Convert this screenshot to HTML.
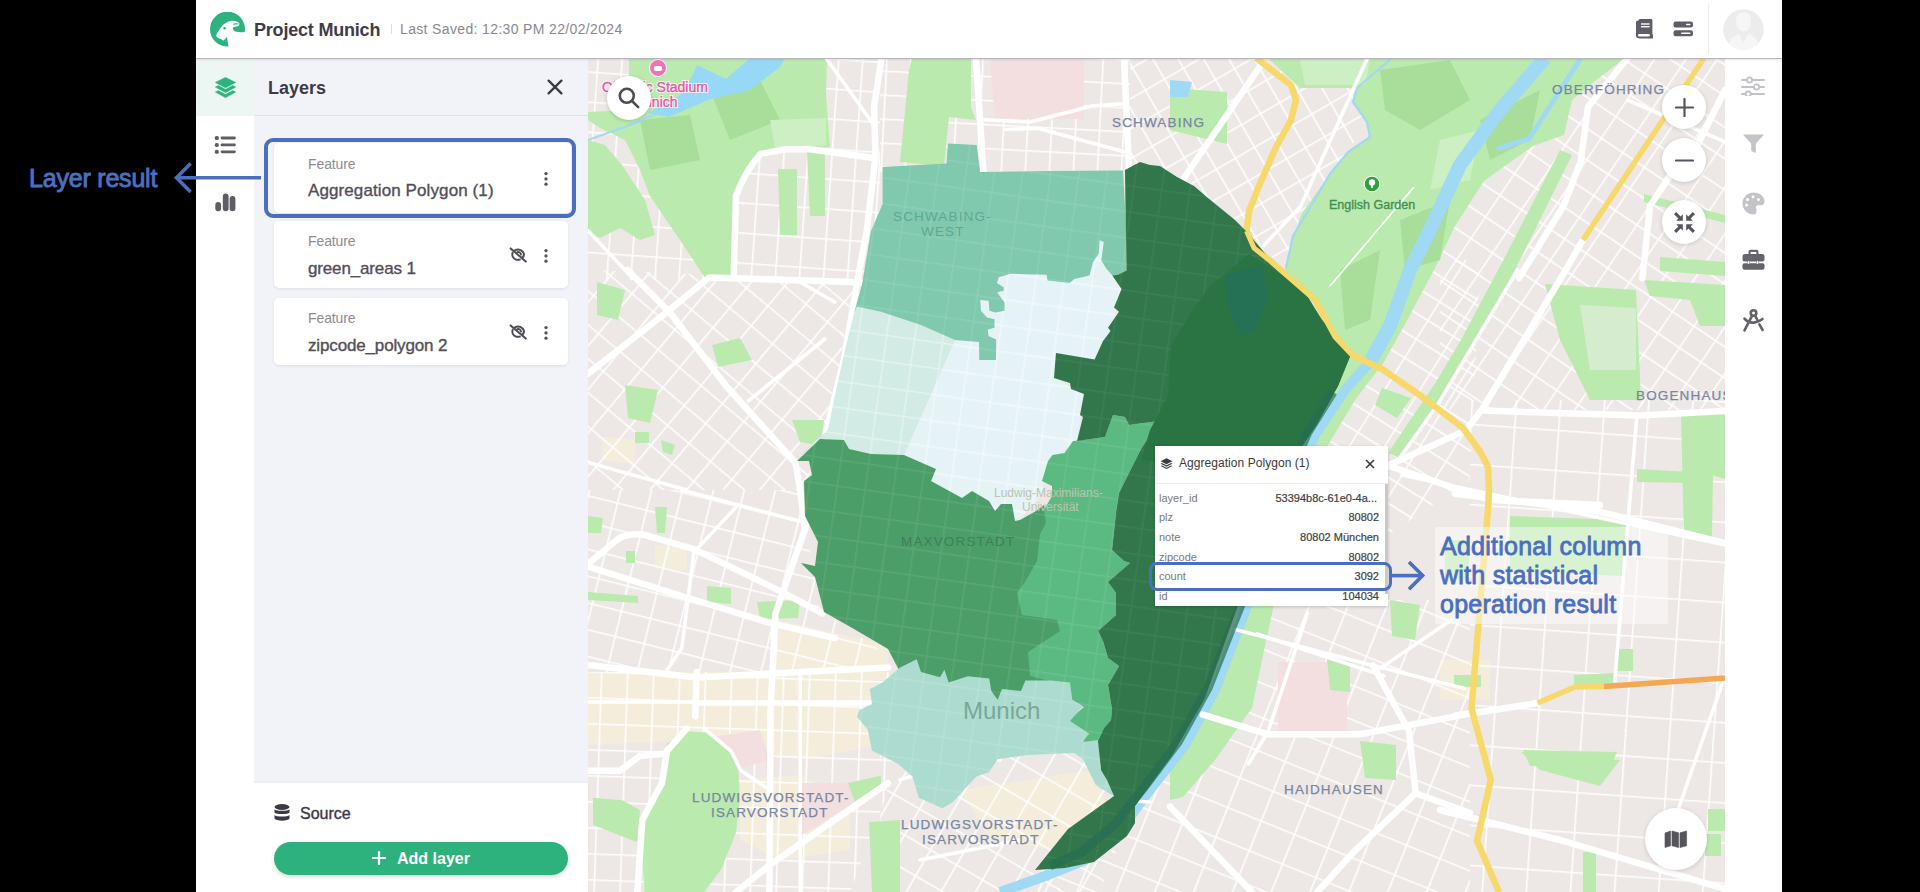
<!DOCTYPE html>
<html><head><meta charset="utf-8">
<style>
*{margin:0;padding:0;box-sizing:border-box}
html,body{width:1920px;height:892px;overflow:hidden;background:#000;font-family:"Liberation Sans",sans-serif}
.abs{position:absolute}
#app{position:absolute;left:196px;top:0;width:1586px;height:892px;background:#fff;overflow:hidden}
#header{position:absolute;left:0;top:0;width:1586px;height:59px;background:#fff;border-bottom:1px solid #b6b5bb;box-shadow:0 1px 2px rgba(0,0,0,0.10);z-index:5}
#iconcol{position:absolute;left:0;top:58px;width:58px;height:834px;background:#fff}
#panel{position:absolute;left:58px;top:58px;width:334px;height:834px;background:#f2f3f9}
#map{position:absolute;left:392px;top:58px;width:1137px;height:834px;background:#ede8e5;overflow:hidden}
#toolbar{position:absolute;left:1529px;top:58px;width:57px;height:834px;background:#fff}
.card{position:absolute;left:20px;width:294px;height:67px;background:#fff;border-radius:5px;box-shadow:0 1px 3px rgba(40,40,60,0.10)}
.card .lbl{position:absolute;left:34px;top:12px;font-size:14px;color:#8e8c92;letter-spacing:-0.1px}
.card .nm{position:absolute;left:34px;top:38px;font-size:17px;color:#524e5a;letter-spacing:-0.15px;-webkit-text-stroke:0.35px #524e5a}
.kebab{position:absolute;width:4px;height:16px}
.kebab i{position:absolute;left:0;width:3.5px;height:3.5px;border-radius:50%;background:#4b4855}
.ann{color:#4a70c0;font-family:"Liberation Sans",sans-serif}
</style></head>
<body>
<div id="app">
  <div id="header">
    <svg class="abs" style="left:14px;top:12px" width="35" height="35" viewBox="0 0 34 34">
      <path fill="#2eb27f" d="M18 33.6 A17 17 0 1 1 33.8 19.2 C32 20 30 19.8 27.5 19.4 C25 19.2 23 18.6 22.2 16.6 C22 15 23.2 14 25.5 14 C27.5 14 28.8 13 28.6 11 C27 9 24 8 21 8.6 C17 9.3 13 11.5 10.3 15.5 C8.5 18.2 6.6 20.8 6 22.6 C6.4 24.8 8 25.8 10.8 26.2 L13 28 L16.4 24.4 Z"/>
      <circle cx="14.2" cy="15.8" r="1.2" fill="#2eb27f"/>
      <path fill="#2eb27f" d="M22.5 11.5 C25 10.6 27.5 10.8 29 12 C27 11.8 25 12 22.5 12.5Z"/>
    </svg>
    <div class="abs" style="left:58px;top:20px;font-size:18px;font-weight:bold;color:#3f3c48;letter-spacing:-0.2px">Project Munich</div>
    <div class="abs" style="left:195px;top:24px;width:1px;height:10px;background:#dcdcdf"></div>
    <div class="abs" style="left:204px;top:21px;font-size:14px;color:#8b898f;letter-spacing:0.35px">Last Saved: 12:30 PM 22/02/2024</div>
    <div class="abs" style="left:1512px;top:4px;width:1px;height:50px;background:#ececee"></div>
    <svg class="abs" style="left:1439px;top:19px" width="20" height="20" viewBox="0 0 20 20">
      <path fill="#5f5e66" d="M3.5 1.5 Q3.5 0 5 0 L16 0 Q17.4 0 17.4 1.4 L17.4 14.5 L18 16.5 L18 19.5 L5 19.5 Q1 19.5 1 16.6 L1 3 Q1 1.5 3.5 1.5Z"/>
      <rect x="6" y="4.3" width="8.6" height="1.4" fill="#fff"/>
      <rect x="6" y="7" width="8.6" height="1.4" fill="#fff"/>
      <rect x="3" y="15" width="12" height="2.4" rx="1.2" fill="#fff"/>
    </svg>
    <svg class="abs" style="left:1477px;top:21px" width="20" height="16" viewBox="0 0 20 16">
      <rect x="0.5" y="0.5" width="19.5" height="6" rx="2.2" fill="#5f5e66"/>
      <rect x="0.5" y="9.3" width="19.5" height="6" rx="2.2" fill="#5f5e66"/>
      <rect x="13" y="2.8" width="4.5" height="1.5" rx="0.7" fill="#fff"/>
      <rect x="8" y="11.6" width="9.5" height="1.5" rx="0.7" fill="#fff"/>
    </svg>
    <svg class="abs" style="left:1527px;top:9px" width="41" height="41" viewBox="0 0 41 41">
      <circle cx="20.5" cy="20.5" r="20.3" fill="#ececec"/>
      <path fill="#f6f6f6" d="M13 12 C13 6 16 3.5 20.5 3.5 C25 3.5 28 6 28 12 C28 17 26 22 20.5 22.5 C15 22 13 17 13 12Z"/>
      <path fill="#f6f6f6" d="M6 34 C8 28 12 26.5 16 25 L20.5 34 L25 25 C29 26.5 33 28 35 34 C31 38.5 26 40.8 20.5 40.8 C15 40.8 10 38.5 6 34Z"/>
    </svg>
  </div>
  <div id="iconcol">
    <div class="abs" style="left:0;top:0;width:58px;height:58px;background:#ecf7f3"></div>
    <svg class="abs" style="left:19px;top:18.5px" width="21" height="21" viewBox="0 0 20 20">
      <path fill="#2eb27f" stroke="#2eb27f" stroke-width="0.6" stroke-linejoin="round" d="M10 0.4 L19.6 5.2 L10 10.2 L0.4 5.2Z"/>
      <path fill="#2eb27f" stroke="#2eb27f" stroke-width="0.6" stroke-linejoin="round" d="M0.4 9.6 L3.2 8.2 L10 11.8 L16.8 8.2 L19.6 9.6 L10 14.8Z"/>
      <path fill="#2eb27f" stroke="#2eb27f" stroke-width="0.6" stroke-linejoin="round" d="M0.4 14.4 L3.2 13 L10 16.6 L16.8 13 L19.6 14.4 L10 19.6Z"/>
    </svg>
    <svg class="abs" style="left:18px;top:77px" width="22" height="20" viewBox="0 0 22 20">
      <g fill="#5f5e66"><rect x="0.8" y="1" width="4" height="4" rx="1.6"/><rect x="0.8" y="7.9" width="4" height="4" rx="1.6"/><rect x="0.8" y="14.8" width="4" height="4" rx="1.6"/></g>
      <g stroke="#5f5e66" stroke-width="2.8" stroke-linecap="round"><path d="M8 3 H20.4"/><path d="M8 9.9 H20.4"/><path d="M8 16.8 H20.4"/></g>
    </svg>
    <svg class="abs" style="left:214px;top:192px;left:18px;top:134px" width="22" height="22" viewBox="0 0 22 22">
      <g stroke="#5f5e66" stroke-width="5.8" stroke-linecap="round"><path d="M4.2 12.9 V16.3"/><path d="M11.7 4.4 V16.3"/><path d="M18.5 6.9 V16.3"/></g>
    </svg>
  </div>
  <div id="panel">
    <div class="abs" style="left:0;top:57px;width:334px;height:1px;background:#e2e3e8"></div>
    <div class="abs" style="left:14px;top:20px;font-size:18px;font-weight:bold;color:#3d3a47">Layers</div>
    <svg class="abs" style="left:293px;top:21px" width="16" height="16" viewBox="0 0 16 16"><g stroke="#3d3a47" stroke-width="2.3" stroke-linecap="round"><path d="M1.6 1.6 L14.4 14.4"/><path d="M14.4 1.6 L1.6 14.4"/></g></svg>
    <div class="card" style="top:85px;width:297px;height:70px"><div class="lbl" style="top:13px">Feature</div><div class="nm" style="top:38px;letter-spacing:0.1px">Aggregation Polygon (1)</div><svg class="abs" style="left:269px;top:28px" width="6" height="16" viewBox="0 0 6 16"><g fill="#55525d"><circle cx="3" cy="2.6" r="1.65"/><circle cx="3" cy="7.9" r="1.65"/><circle cx="3" cy="13.2" r="1.65"/></g></svg></div>
    <div class="card" style="top:163px"><div class="lbl">Feature</div><div class="nm">green_areas 1</div><svg class="abs" style="left:235px;top:26px" width="18" height="16" viewBox="0 0 18 16"><g fill="none" stroke="#4f4c58" stroke-width="2" stroke-linecap="round"><path d="M5.5 3.6 C8.5 2 12 2.6 14 5 C15.5 7 15 9.2 13.2 10.8"/><path d="M3.6 5.8 C2.8 8.6 4 11.5 7 12.6 C8.4 13 9.5 12.9 10.8 12.6"/><path d="M8.3 5.2 C10 4.6 11.8 5.8 12 7.5"/><path d="M1.6 1.4 L16.8 14.6"/></g></svg><svg class="abs" style="left:269px;top:27px" width="6" height="16" viewBox="0 0 6 16"><g fill="#55525d"><circle cx="3" cy="2.6" r="1.65"/><circle cx="3" cy="7.9" r="1.65"/><circle cx="3" cy="13.2" r="1.65"/></g></svg></div>
    <div class="card" style="top:240px"><div class="lbl">Feature</div><div class="nm">zipcode_polygon 2</div><svg class="abs" style="left:235px;top:26px" width="18" height="16" viewBox="0 0 18 16"><g fill="none" stroke="#4f4c58" stroke-width="2" stroke-linecap="round"><path d="M5.5 3.6 C8.5 2 12 2.6 14 5 C15.5 7 15 9.2 13.2 10.8"/><path d="M3.6 5.8 C2.8 8.6 4 11.5 7 12.6 C8.4 13 9.5 12.9 10.8 12.6"/><path d="M8.3 5.2 C10 4.6 11.8 5.8 12 7.5"/><path d="M1.6 1.4 L16.8 14.6"/></g></svg><svg class="abs" style="left:269px;top:27px" width="6" height="16" viewBox="0 0 6 16"><g fill="#55525d"><circle cx="3" cy="2.6" r="1.65"/><circle cx="3" cy="7.9" r="1.65"/><circle cx="3" cy="13.2" r="1.65"/></g></svg></div>
    <div class="abs" style="left:0;top:725px;width:334px;height:109px;background:#fff;box-shadow:0 -1px 2px rgba(0,0,0,0.04)"></div>
    <svg class="abs" style="left:20px;top:746px" width="16" height="18" viewBox="0 0 16 18"><g fill="#3d3a47"><ellipse cx="8" cy="3" rx="7.5" ry="2.9"/><path d="M0.5 5.3 C2 7.3 14 7.3 15.5 5.3 L15.5 8.6 C14 10.6 2 10.6 0.5 8.6Z"/><path d="M0.5 11 C2 13 14 13 15.5 11 L15.5 14.6 C14 17.4 2 17.4 0.5 14.6Z"/></g></svg>
    <div class="abs" style="left:46px;top:747px;font-size:16px;color:#3d3a47;-webkit-text-stroke:0.4px #3d3a47">Source</div>
    <div class="abs" style="left:20px;top:784px;width:294px;height:33px;border-radius:17px;background:#2db27e;box-shadow:0 2px 4px rgba(0,0,0,0.15)"></div>
    <svg class="abs" style="left:118px;top:793px" width="14" height="14" viewBox="0 0 14 14"><g stroke="#fff" stroke-width="2.2" stroke-linecap="round"><path d="M7 1 V13"/><path d="M1 7 H13"/></g></svg>
    <div class="abs" style="left:143px;top:792px;font-size:16px;font-weight:bold;color:#fff">Add layer</div>
  </div>
  <div id="map">
<svg id="mapsvg" width="1137" height="834" viewBox="588 58 1137 834" style="position:absolute;left:0;top:0">
<defs>
<pattern id="p1" width="24" height="30" patternUnits="userSpaceOnUse" patternTransform="rotate(4)"><path d="M0 0.8 H24 M0.8 0 V30" stroke="#fff" stroke-width="1.6" fill="none"/></pattern>
<pattern id="p2" width="28" height="26" patternUnits="userSpaceOnUse" patternTransform="rotate(40)"><path d="M0 0.8 H28 M0.8 0 V26" stroke="#fff" stroke-width="1.6" fill="none"/></pattern>
<pattern id="p3" width="30" height="26" patternUnits="userSpaceOnUse" patternTransform="rotate(14)"><path d="M0 0.8 H30 M0.8 0 V26" stroke="#fff" stroke-width="1.6" fill="none"/></pattern>
<pattern id="p4" width="26" height="26" patternUnits="userSpaceOnUse" patternTransform="rotate(2)"><path d="M0 0.8 H26 M0.8 0 V26" stroke="#fff" stroke-width="1.6" fill="none"/></pattern>
<pattern id="p5" width="24" height="24" patternUnits="userSpaceOnUse" patternTransform="rotate(3)"><path d="M0 0.8 H24 M0.8 0 V24" stroke="#fff" stroke-width="1.6" fill="none"/></pattern>
<pattern id="p6" width="22" height="26" patternUnits="userSpaceOnUse" patternTransform="rotate(-30)"><path d="M0 0.8 H22 M0.8 0 V26" stroke="#fff" stroke-width="1.6" fill="none"/></pattern>
<pattern id="p7" width="22" height="30" patternUnits="userSpaceOnUse" patternTransform="rotate(-58)"><path d="M0 0.8 H22 M0.8 0 V30" stroke="#fff" stroke-width="1.6" fill="none"/></pattern>
<pattern id="p8" width="26" height="26" patternUnits="userSpaceOnUse" patternTransform="rotate(-56)"><path d="M0 0.8 H26 M0.8 0 V26" stroke="#fff" stroke-width="1.6" fill="none"/></pattern>
<pattern id="p9" width="36" height="32" patternUnits="userSpaceOnUse" patternTransform="rotate(22)"><path d="M0 0.8 H36 M0.8 0 V32" stroke="#fff" stroke-width="1.6" fill="none"/></pattern>
<pattern id="p10" width="44" height="40" patternUnits="userSpaceOnUse" patternTransform="rotate(4)"><path d="M0 0.8 H44 M0.8 0 V40" stroke="#fff" stroke-width="1.6" fill="none"/></pattern>
<pattern id="p11" width="30" height="30" patternUnits="userSpaceOnUse" patternTransform="rotate(30)"><path d="M0 0.8 H30 M0.8 0 V30" stroke="#fff" stroke-width="1.6" fill="none"/></pattern>
<pattern id="pf" width="28" height="26" patternUnits="userSpaceOnUse" patternTransform="rotate(8)"><path d="M0 0.8 H28 M0.8 0 V26" stroke="#fff" stroke-width="1.4" fill="none"/></pattern>
</defs>
<rect x="588" y="58" width="1137" height="834" fill="#ede8e5"/>
<path fill="#f4eddc" d="M588 672 L880 672 L880 745 L800 760 L700 740 L588 745Z"/>
<path fill="#f4eddc" d="M740 780 L800 775 L850 800 L850 850 L780 860 L740 840Z"/>
<path fill="#f4eddc" d="M770 618 L888 645 L888 680 L770 680Z"/>
<path fill="#f4eddc" d="M655 545 L687 548 L687 571 L655 568Z"/>
<path fill="#f4eddc" d="M602 437 L635 440 L635 464 L602 460Z"/>
<path fill="#f4eddc" d="M960 790 L1090 770 L1110 810 L1060 850 L990 840Z"/>
<path fill="#f4eddc" d="M1440 660 L1490 660 L1490 700 L1440 700Z"/>
<path fill="url(#p1)" opacity="0.95" d="M588 58 L880 58 L880 280 L588 280Z"/>
<path fill="url(#p2)" opacity="0.95" d="M588 270 L860 280 L830 440 L800 490 L588 490Z"/>
<path fill="url(#p3)" opacity="0.95" d="M588 490 L800 490 L820 610 L880 650 L880 672 L588 672Z"/>
<path fill="url(#p4)" opacity="0.95" d="M588 672 L900 672 L900 760 L850 892 L588 892Z"/>
<path fill="url(#p5)" opacity="0.95" d="M880 58 L1130 58 L1130 172 L880 172Z"/>
<path fill="url(#p6)" opacity="0.95" d="M1130 58 L1370 58 L1367 122 L1348 152 L1308 211 L1286 268 L1240 230 L1130 172Z"/>
<path fill="url(#p7)" opacity="0.95" d="M1340 260 L1480 260 L1470 480 L1230 640 L1280 470Z"/>
<path fill="url(#p8)" opacity="0.95" d="M1440 58 L1725 58 L1725 410 L1440 410Z"/>
<path fill="url(#p9)" opacity="0.95" d="M1160 600 L1470 600 L1470 892 L1010 892 L1130 810Z"/>
<path fill="url(#p10)" opacity="0.95" d="M1470 400 L1725 400 L1725 892 L1470 892Z"/>
<path fill="url(#p11)" opacity="0.95" d="M880 740 L1160 740 L1100 892 L880 892Z"/>
<path fill="#f3dfdf" d="M990 58 L1084 58 L1084 119 L995 119Z"/>
<path fill="#f3dfdf" d="M1278 662 L1347 662 L1347 731 L1278 731Z"/>
<path fill="#f3dfdf" d="M802 783 L849 783 L854 803 L802 835Z"/>
<path fill="#f3dfdf" d="M690 740 L760 730 L770 760 L700 780Z"/>
<path fill="#bbeaae" d="M629 58 L827 58 L826 95 L830 147 L790 150 L760 158 L742 180 L736 210 L735 278 L705 278 L690 255 L650 196 L640 170 L625 140 L600 128 L588 120 L588 112 L629 110Z"/>
<path fill="#bbeaae" d="M588 140 L605 145 L622 165 L645 200 L655 235 L640 240 L620 228 L600 238 L588 232Z"/>
<path fill="#bbeaae" d="M912 58 L971 58 L971 107 L976 120 L949 117 L944 166 L900 162 L909 70Z"/>
<path fill="#bbeaae" d="M667 743.6 L686.7 731.2 L706.4 732.5 L728.6 748.5 L738.5 770.7 L739.7 800.3 L736 832.4 L721.2 869.4 L704 892 L644.7 892 L642.3 857 L644.7 815 L662 778Z"/>
<path fill="#bbeaae" d="M593 797.8 L622.5 800.3 L640 810 L637.3 842.2 L593 825Z"/>
<path fill="#bbeaae" d="M848 783 L881.6 775.6 L880.4 785.5 L854.5 801.5Z"/>
<path fill="#bbeaae" d="M1268 58 L1625 58 L1595 81 L1572 100 L1564 135 L1533 146 L1495 173 L1484 181 L1455 226 L1434 270 L1404 326 L1384 362 L1355 400 L1325 450 L1312 448 L1338 385 L1349 354 L1335 337 L1315 300 L1285 270 L1290 246 L1302 213 L1330 174 L1348 152 L1370 137 L1367 122 L1352 102 L1357 88 L1300 88Z"/>
<path fill="#bbeaae" d="M1170 88 L1227 92 L1227 144 L1170 130Z"/>
<path fill="#bbeaae" d="M1560 150 L1572 155 L1520 260 L1478 340 L1450 385 L1400 458 L1388 453 L1436 382 L1462 338 L1506 255Z"/>
<path fill="#bbeaae" d="M1382 388 L1411 398 L1397 418 L1375 405Z"/>
<path fill="#bbeaae" d="M1545 284 L1636 290 L1641 400 L1590 400 L1560 340Z"/>
<path fill="#bbeaae" d="M1644 194 L1725 215 L1725 223 L1644 202Z"/>
<path fill="#bbeaae" d="M1660 257 L1725 262 L1725 276 L1660 271Z"/>
<path fill="#bbeaae" d="M1644 280 L1725 285 L1725 326 L1700 326 L1690 300 L1650 296Z"/>
<path fill="#bbeaae" d="M807 152 L825 152 L825 216 L810 216Z"/>
<path fill="#bbeaae" d="M778 169 L797 169 L797 235 L780 235Z"/>
<path fill="#bbeaae" d="M869 822 L900 820 L900 892 L872 892Z"/>
<path fill="#bbeaae" d="M1245 600 L1275 600 L1262 660 L1252 708 L1215 760 L1183 797 L1170 800 L1170 770 L1215 700 L1235 640Z"/>
<path fill="#bbeaae" d="M1327 659 L1350 662 L1350 692 L1330 690Z"/>
<path fill="#bbeaae" d="M1360 741 L1396 745 L1396 780 L1365 778Z"/>
<path fill="#bbeaae" d="M1681 416 L1714 416 L1712 537 L1684 537Z"/>
<path fill="#bbeaae" d="M1521 752 L1620 760 L1600 786 L1540 770Z"/>
<path fill="#bbeaae" d="M1637 469 L1692 472 L1692 483 L1637 482Z"/>
<path fill="#bbeaae" d="M1510 516 L1626 520 L1626 576 L1510 572Z"/>
<path fill="#bbeaae" d="M625 385 L658 390 L650 423 L628 418Z"/>
<path fill="#bbeaae" d="M597 282 L625 290 L618 320 L597 315Z"/>
<path fill="#bbeaae" d="M712 345 L740 338 L752 360 L718 367Z"/>
<path fill="#bbeaae" d="M707 586 L731 588 L731 604 L707 602Z"/>
<path fill="#bbeaae" d="M588 592 L638 596 L638 603 L588 600Z"/>
<path fill="#bbeaae" d="M635 432 L649 432 L649 443 L635 443Z"/>
<path fill="#bbeaae" d="M661 440 L675 445 L672 455 L663 452Z"/>
<path fill="#bbeaae" d="M655 507 L667 507 L665 533 L657 533Z"/>
<path fill="#bbeaae" d="M792 420 L824 420 L820 446 L800 442Z"/>
<path fill="#bbeaae" d="M588 516 L603 518 L601 533 L588 533Z"/>
<path fill="#bbeaae" d="M626 551 L635 551 L635 563 L626 563Z"/>
<path fill="#bbeaae" d="M757 602 L800 600 L798 618 L760 619Z"/>
<path fill="#bbeaae" d="M1691 413 L1725 413 L1725 479 L1695 470Z"/>
<path fill="#bbeaae" d="M1523 750 L1617 752 L1610 768 L1530 766Z"/>
<path fill="#bbeaae" d="M1390 600 L1420 605 L1415 640 L1392 636Z"/>
<path fill="#bbeaae" d="M1445 540 L1470 540 L1468 580 L1445 578Z"/>
<path fill="#bbeaae" d="M1280 480 L1300 470 L1290 520 L1275 525Z"/>
<path fill="#bbeaae" d="M1617 649 L1633 649 L1633 671 L1617 671Z"/>
<path fill="#bbeaae" d="M1574 675 L1614 673 L1614 686 L1574 688Z"/>
<path fill="#bbeaae" d="M1454 675 L1481 675 L1481 687 L1454 687Z"/>
<path fill="#bbeaae" d="M1705 834 L1721 834 L1721 856 L1705 856Z"/>
<path fill="#bbeaae" d="M1708 809 L1725 809 L1725 831 L1708 831Z"/>
<path fill="#bbeaae" d="M1583 852 L1596 852 L1596 892 L1583 892Z"/>
<path fill="#d6eccf" d="M1580 305 L1636 308 L1636 370 L1590 370Z"/>
<path fill="#a8de9a" d="M1380 70 L1450 60 L1470 100 L1420 130 L1385 110Z"/>
<path fill="#a8de9a" d="M1480 120 L1540 90 L1530 140 L1490 160Z"/>
<path fill="#a8de9a" d="M1400 220 L1450 200 L1440 260 L1405 270Z"/>
<path fill="#a8de9a" d="M1340 270 L1380 250 L1370 320 L1345 330Z"/>
<path fill="#a8de9a" d="M710 90 L760 80 L780 120 L730 140Z"/>
<path fill="#a8de9a" d="M640 120 L690 115 L700 160 L650 170Z"/>
<path fill="#cdefc4" d="M1300 60 L1370 60 L1365 85 L1305 85Z"/>
<path fill="#cdefc4" d="M1440 140 L1480 130 L1470 180 L1430 190Z"/>
<path fill="#cdefc4" d="M770 120 L826 118 L826 145 L775 148Z"/>
<path fill="#97d8f6" d="M648 113 L680 95 L692 76 L697 65 L726 79 L750 58 L785 58 L780 67 L750 90 L708 100 L669 117Z"/>
<path d="M588 140 L630 125 L665 110" fill="none" stroke="#9fd9f4" stroke-width="2"/>
<path fill="#9fd9f4" d="M1170 80 L1192 82 L1188 97 L1170 97Z"/>
<path d="M1545 58 L1500 110 L1460 165 L1430 230 L1410 270 L1390 326 L1370 362" fill="none" stroke="#9fd9f4" stroke-width="14" stroke-linejoin="round"/>
<path d="M1370 362 L1345 390 L1315 435 L1285 500 L1258 575 L1240 625 L1215 690 L1185 745 L1150 790 L1120 830 L1085 860 L1040 878 L1000 892" fill="none" stroke="#9fd9f4" stroke-width="10" stroke-linejoin="round"/>
<path d="M1581 58 L1529 139 L1497 149" fill="none" stroke="#9fd9f4" stroke-width="5"/>
<path d="M1392 58 L1357 88 L1353 102 L1367 122 L1370 137 L1348 152 L1330 174 L1308 211 L1293 236 L1286 268" fill="none" stroke="#9fd9f4" stroke-width="2.2"/>
<g fill="none" stroke="#fff" stroke-linecap="round" stroke-linejoin="round">
<g stroke-width="6.5"><path d="M733.6 278 L736 196 Q746 169 760.7 154 L785.4 149.3 L810 149.3 L874 158"/><path d="M881.6 58 L874 107 L875.5 156.7 L866.8 230.7 L859.4 270 L844.6 356.4 L824.9 437.8 L805 529.5 L775.5 613.4 L770.6 710 L769.4 892"/><path d="M976 58 L983.5 172.7"/><path d="M1124 58 L1129 169"/><path d="M627.5 270 L669.4 312 L726.2 386 L795.3 462.4 L800.2 490 L805 529.5"/><path d="M588 373.6 L667 312 L709 277.4 L859.4 282.3 L879 287.3"/><path d="M588 564 L617.6 539.3 Q625 534 642.3 534.4 L694 549.2 L780.4 591.2 L822.4 613.4"/><path d="M588 566.5 L681.8 596 L770.6 623.2 L834.7 638"/><path d="M588 665 L696.6 677.5 L888 667.6"/><path d="M696.6 672 L695.3 716.4"/><path d="M686.7 728.7 L667 751 L662 783 L642.3 820 L637.3 892"/><path d="M888 783 L770.6 864.4 L736 892"/><path d="M588 770.7 L620 770.7 L639.8 756 L667 753.4"/><path d="M1261 65 L1182 181"/><path d="M1627.6 58 L1588 107 L1580.7 161.6 L1563.5 206 L1519 278"/><path d="M1583 240 L1561 278 L1483 408 L1465.8 430.4 L1389 465"/><path d="M1725 90 L1696.6 146.8 L1669.5 176.3 L1650 206 L1642.4 278"/><path d="M1483 410.6 L1640 415.6 L1725 411"/><path d="M1455 493.7 L1592.7 510 L1725 543"/><path d="M1202.8 714.6 L1268.3 734.3 L1360 734.3 L1464.8 714.6 L1537.6 703"/><path d="M1440 810 L1560 840 L1725 889"/><path d="M1415.6 793.3 L1470 813"/><path d="M1373 665.5 L1409 731 L1415.6 793.3 L1353.4 852.2 L1317.4 892"/><path d="M1170 806.4 L1251.9 892"/><path d="M1389 466 L1490 500 L1600 505"/></g>
<g stroke-width="3.6"><path d="M826 58 L871.7 122"/><path d="M983.5 119.7 L1030 122 L1092 106 L1124 103.6"/><path d="M1005.7 129.5 L1037.8 128.3 L1124 151.8"/><path d="M588 230.7 L632.4 278"/><path d="M748.4 400.8 L824.9 339"/><path d="M800.2 282.3 L834.7 302"/><path d="M588 462.4 L686.7 490"/><path d="M694 551.7 L681.8 648 L667 670"/><path d="M681.8 490 L802.6 522"/><path d="M736 507.3 L696.6 549.2"/><path d="M588 702 L888 702"/><path d="M696.6 704 L871.7 704"/><path d="M704 728.7 L731 751 L741 770.7 L770.6 790.4"/><path d="M800.2 672 L800.2 892"/><path d="M1367.4 58 L1300.8 206 L1263.8 245.5"/><path d="M1627.6 100 L1725 141.8"/><path d="M1517.6 270 L1438.7 403 L1396.7 462.4"/><path d="M1235.5 629.5 L1373 665.5 L1464.8 688.4"/><path d="M1307.6 613 L1268.3 731 L1248.6 763.8"/><path d="M1379.6 668.8 L1451.7 619.7"/><path d="M1636.8 416.5 L1614.8 681"/><path d="M1455 714 L1537.6 703"/><path d="M1725 675.5 L1675 818.7"/><path d="M1257 634 L1384 676"/><path d="M1402 475 L1725 545"/><path d="M1110 800 L1150 802"/><path d="M900 780 L960 760 L1000 760"/><path d="M920 860 L1020 840"/></g>
</g>
<path d="M1256 58 L1291 85 L1296 100 L1291 120 L1276 147 L1259 186 L1249 211 L1246.5 231 L1254 248 L1269 260 L1286 275 L1315 300 L1335 337 L1352 355 L1382 369 L1421 396 L1463 428 L1481 453 L1488 467 L1489 490 L1488 510 L1471.5 708.5 L1490.8 780 L1477 840.8 L1499 892" fill="none" stroke="#f6d86b" stroke-width="6.5" stroke-linejoin="round"/>
<path d="M1704 58 L1583 240" fill="none" stroke="#f6d86b" stroke-width="5.5"/>
<path d="M1537.6 703 L1575 687 L1604 686.5" fill="none" stroke="#f6d86b" stroke-width="5.5" stroke-linejoin="round"/>
<path d="M1604 686.5 L1725 678" fill="none" stroke="#f5a853" stroke-width="5.5"/>
<path fill="#e6f3f6" d="M955 340 L980 300 L1000 272 L1090 272 L1097 238 L1106 238 L1112 270 L1126 280 L1110 330 L1095 360 L1056 353 L1054 378 L1084 394 L1077 441 L1048 461 L1041 496 L1019 520 L995 511 L962 498 L931 481 L904 455Z"/>
<clipPath id="c1"><path d="M955 340 L980 300 L1000 272 L1090 272 L1097 238 L1106 238 L1112 270 L1126 280 L1110 330 L1095 360 L1056 353 L1054 378 L1084 394 L1077 441 L1048 461 L1041 496 L1019 520 L995 511 L962 498 L931 481 L904 455Z"/></clipPath>
<rect x="780" y="130" width="600" height="760" fill="url(#pf)" opacity="0.45" clip-path="url(#c1)"/>
<path fill="#d3ebe5" d="M854 313 L857 306.6 L881 311.7 L921 325 L955 340 L904 455 L871 454 L849 449 L844 440 L820 439 L797 461 L805 450 L828 430 L836 390 L845 350Z"/>
<clipPath id="c2"><path d="M854 313 L857 306.6 L881 311.7 L921 325 L955 340 L904 455 L871 454 L849 449 L844 440 L820 439 L797 461 L805 450 L828 430 L836 390 L845 350Z"/></clipPath>
<rect x="780" y="130" width="600" height="760" fill="url(#pf)" opacity="0.4" clip-path="url(#c2)"/>
<path fill="#80c9ae" d="M882.6 167 L946.5 163.6 L948 143.5 L976.8 145 L980 172 L1050 171 L1123 170.4 L1125.7 220 L1126.6 270.5 L1118 274.7 L1112.3 275.5 L1106.4 268.8 L1101.3 260.4 L1103.8 241.9 L1099.6 240.2 L1098.8 253.6 L1093 262 L1089.5 275.5 L1074.4 278.9 L1069.4 283 L1047.5 280.6 L1046.6 274.7 L1010.5 273.8 L998.7 277.2 L997 283 L1003.7 287.3 L1003.7 290.7 L997 292.3 L1004.6 302.4 L1004.6 310.8 L995.3 312.5 L989.4 310.8 L988.6 300.8 L980.2 300 L981 310.8 L987 317.6 L994.5 319.3 L994.5 327.7 L987.8 329.4 L988.6 336 L996.2 339.4 L996 360 L979.3 360 L979 342 L955 340 L921 325 L881 311.7 L857 306.6 L854 313 L862 284.8 L871 231 L882.6 204Z"/>
<clipPath id="c3"><path d="M882.6 167 L946.5 163.6 L948 143.5 L976.8 145 L980 172 L1050 171 L1123 170.4 L1125.7 220 L1126.6 270.5 L1118 274.7 L1112.3 275.5 L1106.4 268.8 L1101.3 260.4 L1103.8 241.9 L1099.6 240.2 L1098.8 253.6 L1093 262 L1089.5 275.5 L1074.4 278.9 L1069.4 283 L1047.5 280.6 L1046.6 274.7 L1010.5 273.8 L998.7 277.2 L997 283 L1003.7 287.3 L1003.7 290.7 L997 292.3 L1004.6 302.4 L1004.6 310.8 L995.3 312.5 L989.4 310.8 L988.6 300.8 L980.2 300 L981 310.8 L987 317.6 L994.5 319.3 L994.5 327.7 L987.8 329.4 L988.6 336 L996.2 339.4 L996 360 L979.3 360 L979 342 L955 340 L921 325 L881 311.7 L857 306.6 L854 313 L862 284.8 L871 231 L882.6 204Z"/></clipPath>
<rect x="780" y="130" width="600" height="760" fill="url(#pf)" opacity="0.1" clip-path="url(#c3)"/>
<path fill="#4b9e68" d="M797 461 L820 439 L844 440 L849 449 L871 454 L904 455 L936 469 L931 481 L962 498 L972 491 L989 501 L995 511 L1001 504 L1012 504 L1015 521 L1020 520 L1036 511 L1044 505 L1065 560 L1065 600 L1065 640 L1060 700 L1030 700 L1000 712 L960 705 L920 690 L900 672 L888 649 L854 629 L824 612 L815 577 L801 563 L815 566 L818 542 L805 516 L804 481 L812 475 L809 461Z"/>
<clipPath id="c4"><path d="M797 461 L820 439 L844 440 L849 449 L871 454 L904 455 L936 469 L931 481 L962 498 L972 491 L989 501 L995 511 L1001 504 L1012 504 L1015 521 L1020 520 L1036 511 L1044 505 L1065 560 L1065 600 L1065 640 L1060 700 L1030 700 L1000 712 L960 705 L920 690 L900 672 L888 649 L854 629 L824 612 L815 577 L801 563 L815 566 L818 542 L805 516 L804 481 L812 475 L809 461Z"/></clipPath>
<rect x="780" y="130" width="600" height="760" fill="url(#pf)" opacity="0.09" clip-path="url(#c4)"/>
<path fill="#5aba82" d="M1073 441 L1091 439 L1105 437 L1113 415 L1125 417 L1129 425 L1159 421 L1141 449 L1129 473 L1119 493 L1116 512 L1112 550 L1124 561 L1130 563 L1108 582 L1116 593 L1116 615 L1098 631 L1103 641 L1108 658 L1119 666 L1108 685 L1112 709 L1111 720 L1104 728 L1098 741 L1081 744 L1088 734 L1068 724 L1071 718 L1084 707 L1071 703 L1060 684 L1030 676 L1028 652 L1060 631 L1057 620 L1022 615 L1017 593 L1025 582 L1037 561 L1040 534 L1046 523 L1044 510 L1052 496 L1052 486 L1042 481 L1048 461 L1052.5 455 L1064.6 453Z"/>
<clipPath id="c5"><path d="M1073 441 L1091 439 L1105 437 L1113 415 L1125 417 L1129 425 L1159 421 L1141 449 L1129 473 L1119 493 L1116 512 L1112 550 L1124 561 L1130 563 L1108 582 L1116 593 L1116 615 L1098 631 L1103 641 L1108 658 L1119 666 L1108 685 L1112 709 L1111 720 L1104 728 L1098 741 L1081 744 L1088 734 L1068 724 L1071 718 L1084 707 L1071 703 L1060 684 L1030 676 L1028 652 L1060 631 L1057 620 L1022 615 L1017 593 L1025 582 L1037 561 L1040 534 L1046 523 L1044 510 L1052 496 L1052 486 L1042 481 L1048 461 L1052.5 455 L1064.6 453Z"/></clipPath>
<rect x="780" y="130" width="600" height="760" fill="url(#pf)" opacity="0.1" clip-path="url(#c5)"/>
<path fill="#acdccf" d="M869.8 689 L882.6 682.6 L899.7 667.7 L916.7 659.2 L921 672 L940 677.3 L944.4 669.8 L948.7 682.6 L967.8 676.2 L989.2 678.4 L991.3 691.1 L997.7 699.7 L1002 689 L1021 691.1 L1025.4 680.5 L1051 680.5 L1070 682.6 L1072.3 699.7 L1083 706 L1070 721 L1089.3 733.8 L1080.8 742.3 L1099 740 L1100 767.8 L1114.9 789.2 L1112.7 795.6 L1095.7 785 L1083 759.3 L1074.4 753 L1027.5 755 L997.7 759.3 L989.2 772 L976.4 776.4 L953 802 L942.3 808.3 L918.8 797.7 L912.4 776.4 L897.5 763.6 L872 750.8 L867.7 729.5 L857 716.7 L859.2 710.3 L872 704Z"/>
<clipPath id="c6"><path d="M869.8 689 L882.6 682.6 L899.7 667.7 L916.7 659.2 L921 672 L940 677.3 L944.4 669.8 L948.7 682.6 L967.8 676.2 L989.2 678.4 L991.3 691.1 L997.7 699.7 L1002 689 L1021 691.1 L1025.4 680.5 L1051 680.5 L1070 682.6 L1072.3 699.7 L1083 706 L1070 721 L1089.3 733.8 L1080.8 742.3 L1099 740 L1100 767.8 L1114.9 789.2 L1112.7 795.6 L1095.7 785 L1083 759.3 L1074.4 753 L1027.5 755 L997.7 759.3 L989.2 772 L976.4 776.4 L953 802 L942.3 808.3 L918.8 797.7 L912.4 776.4 L897.5 763.6 L872 750.8 L867.7 729.5 L857 716.7 L859.2 710.3 L872 704Z"/></clipPath>
<rect x="780" y="130" width="600" height="760" fill="url(#pf)" opacity="0.14" clip-path="url(#c6)"/>
<path fill="#32774b" d="M1125 170 L1140 162 L1150 165 L1160 166 L1177 177 L1194 186 L1208 198 L1235 220 L1248 233 L1268 257 L1302 287 L1322 320 L1351 354 L1338 386 L1317 424 L1303 445 L1270 530 L1237 608 L1205 698 L1173 754 L1135 806 L1135 823 L1127 836 L1094 862 L1065 868 L1035 870 L1068 829 L1114 796 L1107 780 L1101 770 L1098 741 L1104 728 L1111 720 L1112 709 L1108 685 L1119 666 L1108 658 L1103 641 L1098 631 L1116 615 L1116 593 L1108 582 L1130 563 L1124 561 L1112 550 L1116 512 L1119 493 L1129 473 L1141 449 L1159 421 L1129 425 L1125 417 L1113 415 L1105 437 L1091 439 L1077 441 L1083 417 L1080 415 L1084 394 L1071 389 L1070 383 L1054 378 L1056 353 L1094.6 359.6 L1103 341 L1110.6 331 L1108 327.7 L1119 311.7 L1114 307.5 L1121.5 289 L1112.3 275.5 L1118 274.7 L1126.6 270.5 L1125.7 220Z"/>
<clipPath id="c7"><path d="M1125 170 L1140 162 L1150 165 L1160 166 L1177 177 L1194 186 L1208 198 L1235 220 L1248 233 L1268 257 L1302 287 L1322 320 L1351 354 L1338 386 L1317 424 L1303 445 L1270 530 L1237 608 L1205 698 L1173 754 L1135 806 L1135 823 L1127 836 L1094 862 L1065 868 L1035 870 L1068 829 L1114 796 L1107 780 L1101 770 L1098 741 L1104 728 L1111 720 L1112 709 L1108 685 L1119 666 L1108 658 L1103 641 L1098 631 L1116 615 L1116 593 L1108 582 L1130 563 L1124 561 L1112 550 L1116 512 L1119 493 L1129 473 L1141 449 L1159 421 L1129 425 L1125 417 L1113 415 L1105 437 L1091 439 L1077 441 L1083 417 L1080 415 L1084 394 L1071 389 L1070 383 L1054 378 L1056 353 L1094.6 359.6 L1103 341 L1110.6 331 L1108 327.7 L1119 311.7 L1114 307.5 L1121.5 289 L1112.3 275.5 L1118 274.7 L1126.6 270.5 L1125.7 220Z"/></clipPath>
<rect x="780" y="130" width="600" height="760" fill="url(#pf)" opacity="0.055" clip-path="url(#c7)"/>
<path fill="#2a7443" d="M1249 254 L1300 287 L1322 320 L1351 354 L1338 386 L1317 424 L1303 445 L1290 475 L1141 460 L1150 430 L1168 396 L1171 345 L1190 315 L1208 288Z"/>
<path fill="#24705a" opacity="0.8" d="M1225 275 L1262 265 L1268 300 L1255 330 L1240 335 L1228 305Z"/>
<path d="M1333 392 L1308 432 L1278 502 L1252 577 L1232 627 L1208 688 L1178 742 L1145 786 L1115 824 L1082 852 L1050 866" fill="none" stroke="#246e52" stroke-width="9" opacity="0.7" stroke-linejoin="round"/>
<path d="M1246.5 231 L1254 248 L1269 260 L1286 275 L1315 300 L1335 337 L1352 355 L1382 369" fill="none" stroke="#f6d86b" stroke-width="5" stroke-linejoin="round"/>
<g font-family="Liberation Sans" fill="#7886a3" font-size="13.5" letter-spacing="1.15" stroke="#7886a3" stroke-width="0.25">
<text x="1112" y="127">SCHWABING</text>
<text x="1552" y="94">OBERFÖHRING</text>
<text x="1636" y="400">BOGENHAUSEN</text>
<text x="1284" y="794">HAIDHAUSEN</text>
<text x="692" y="802">LUDWIGSVORSTADT-</text>
<text x="711" y="817">ISARVORSTADT</text>
<text x="901" y="829">LUDWIGSVORSTADT-</text>
<text x="922" y="844">ISARVORSTADT</text>
</g>
<g font-family="Liberation Sans" font-size="13.5" letter-spacing="1.15"><text x="893" y="221" fill="#5ea893">SCHWABING-</text><text x="921" y="236" fill="#5ea893">WEST</text><text x="901" y="546" fill="#3f8059">MAXVORSTADT</text></g>
<text x="963" y="719" font-family="Liberation Sans" font-size="24" fill="#78a89a">Munich</text>
<path d="M1414 187 L1330 286" stroke="#fff" stroke-width="1.6" fill="none"/>
<text x="1329" y="209" font-family="Liberation Sans" font-size="12.5" fill="#3f8d4e" stroke="#3f8d4e" stroke-width="0.3">English Garden</text>
<circle cx="1372" cy="184" r="7.8" fill="#2e9e3e" stroke="#fff" stroke-width="1"/><circle cx="1372" cy="182.5" r="3.2" fill="#fff"/><rect x="1371.2" y="184" width="1.6" height="4" fill="#fff"/>
<text x="994" y="497" font-family="Liberation Sans" font-size="12" fill="#bcc3b3">Ludwig-Maximilians-</text><text x="1022" y="511" font-family="Liberation Sans" font-size="12" fill="#bcc3b3">Universität</text>
<g font-family="Liberation Sans" font-size="14" fill="#e45aa3" text-anchor="middle" stroke="#fff" stroke-width="2" paint-order="stroke"><text x="655" y="92">Olympic Stadium</text><text x="655" y="107">Munich</text></g><g stroke="#e45aa3" stroke-width="0.4" fill="none" font-family="Liberation Sans" font-size="14" text-anchor="middle"><text x="655" y="92">Olympic Stadium</text><text x="655" y="107">Munich</text></g><circle cx="658" cy="68" r="8.5" fill="#e877b4" stroke="#fff" stroke-width="1"/><rect x="654" y="66" width="8" height="5" rx="2" fill="#fff"/>
</svg>
</div>
  <div id="toolbar">
    <svg class="abs" style="left:16px;top:18px" width="24" height="20" viewBox="0 0 24 20"><g stroke="#c4c3c8" stroke-width="2" fill="none" stroke-linecap="round"><path d="M1 4 H23"/><path d="M1 11 H23"/><path d="M1 18 H23"/></g><g fill="#fff" stroke="#c4c3c8" stroke-width="1.8"><circle cx="8.5" cy="4" r="2.6"/><circle cx="15.6" cy="11" r="2.6"/><circle cx="7.2" cy="18" r="2.6"/></g></svg>
    <svg class="abs" style="left:17px;top:76px" width="23" height="20" viewBox="0 0 23 20"><path fill="#c4c3c8" d="M1.5 1.2 Q0.8 0.5 1.8 0.5 L21.2 0.5 Q22.2 0.5 21.5 1.2 L13.8 9.5 L13.8 17.6 Q13.8 19.4 12.3 18.6 L10 17.2 Q9.2 16.6 9.2 15.8 L9.2 9.5Z"/></svg>
    <svg class="abs" style="left:17px;top:134px" width="23" height="23" viewBox="0 0 23 23"><path fill="#c4c3c8" d="M11.5 0.5 C18 0.5 22.5 4.5 22.5 9.5 C22.5 13.5 19 13.5 16.5 13.2 C14 13 13.5 15 14.2 17 C15 19.5 14.5 22.5 11.5 22.5 C5.5 22.5 0.5 17.5 0.5 11.5 C0.5 5.5 5 0.5 11.5 0.5Z"/><g fill="#fff"><circle cx="5.5" cy="7.5" r="1.5"/><circle cx="11" cy="4.8" r="1.5"/><circle cx="16.5" cy="7.5" r="1.5"/><circle cx="4.5" cy="13" r="1.5"/></g></svg>
    <svg class="abs" style="left:17px;top:191px" width="23" height="22" viewBox="0 0 23 22"><path fill="#65636c" d="M6.5 5 L6.5 3 Q6.5 0.8 8.6 0.8 L14.4 0.8 Q16.5 0.8 16.5 3 L16.5 5 L14.4 5 L14.4 3 L8.6 3 L8.6 5Z"/><rect x="0.5" y="5" width="22" height="7.5" rx="2.5" fill="#65636c"/><rect x="0.5" y="14.2" width="22" height="6.6" rx="2" fill="#65636c"/><g fill="#65636c"><rect x="5" y="11" width="3" height="5" rx="1.4"/><rect x="14" y="11" width="3" height="5" rx="1.4"/></g><g fill="#fff"><ellipse cx="6.5" cy="13.4" rx="1.1" ry="1.6"/><ellipse cx="15.5" cy="13.4" rx="1.1" ry="1.6"/></g></svg>
    <svg class="abs" style="left:17px;top:250px" width="23" height="24" viewBox="0 0 23 24"><g fill="none" stroke="#65636c" stroke-width="2.6" stroke-linecap="round"><circle cx="11.5" cy="5" r="2.8"/><path d="M10 7.8 L2.5 22.4"/><path d="M13.2 7.8 L16 13"/><path d="M2.5 10.6 C5 13.6 9.5 15 13 14.4 C16 14 18.5 12.6 20.5 11"/><path d="M17.4 16.4 L20.6 22"/></g></svg>
  </div>
</div>

<!-- map controls -->
<div class="abs" style="left:607px;top:76px;width:44px;height:44px;border-radius:50%;background:#fff;box-shadow:0 1px 4px rgba(0,0,0,0.18)"></div>
<svg class="abs" style="left:617px;top:86px" width="24" height="24" viewBox="0 0 24 24"><g fill="none" stroke="#4f4c58" stroke-width="2.6" stroke-linecap="round"><circle cx="9.8" cy="9.8" r="7"/><path d="M15 15 L21.2 21.2"/></g></svg>
<div class="abs" style="left:1662px;top:85px;width:44px;height:44px;border-radius:50%;background:#fff;box-shadow:0 1px 4px rgba(0,0,0,0.15)"></div>
<svg class="abs" style="left:1675px;top:98px" width="19" height="19" viewBox="0 0 19 19"><g stroke="#56545c" stroke-width="2.2" stroke-linecap="round"><path d="M9.5 1 V18"/><path d="M1 9.5 H18"/></g></svg>
<div class="abs" style="left:1662px;top:138px;width:44px;height:44px;border-radius:50%;background:#fff;box-shadow:0 1px 4px rgba(0,0,0,0.15)"></div>
<svg class="abs" style="left:1675px;top:151px" width="19" height="19" viewBox="0 0 19 19"><g stroke="#56545c" stroke-width="2.2" stroke-linecap="round"><path d="M1 9.5 H18"/></g></svg>
<div class="abs" style="left:1662px;top:200px;width:44px;height:44px;border-radius:50%;background:#fff;box-shadow:0 1px 4px rgba(0,0,0,0.15)"></div>
<svg class="abs" style="left:1673px;top:211px" width="23" height="23" viewBox="0 0 23 23"><g fill="#56545c"><path d="M9.8 9.8 L3.2 9.8 L5.4 7.6 L1 3.2 L3.2 1 L7.6 5.4 L9.8 3.2Z"/><path d="M13.2 9.8 L19.8 9.8 L17.6 7.6 L22 3.2 L19.8 1 L15.4 5.4 L13.2 3.2Z"/><path d="M9.8 13.2 L3.2 13.2 L5.4 15.4 L1 19.8 L3.2 22 L7.6 17.6 L9.8 19.8Z"/><path d="M13.2 13.2 L19.8 13.2 L17.6 15.4 L22 19.8 L19.8 22 L15.4 17.6 L13.2 19.8Z"/></g></svg>
<div class="abs" style="left:1645px;top:808px;width:62px;height:62px;border-radius:50%;background:#fff;box-shadow:0 1px 4px rgba(0,0,0,0.15)"></div>
<svg class="abs" style="left:1664px;top:830px" width="24" height="19" viewBox="0 0 24 19"><g fill="#56545c" stroke="#56545c" stroke-width="0.6" stroke-linejoin="round"><path d="M1 3 L6.6 1 L6.6 15.8 L1 17.6Z"/><path d="M8 1 L14.6 2.8 L14.6 17.6 L8 15.8Z"/><path d="M16 2.8 L22.6 1 L22.6 15.8 L16 17.6Z"/></g></svg>

<!-- popup -->
<div class="abs" style="left:1155px;top:446px;width:233px;height:160px;background:#fff;box-shadow:0 1px 3px rgba(0,0,0,0.2);font-family:'Liberation Sans',sans-serif">
  <svg class="abs" style="left:5px;top:12px" width="13" height="13" viewBox="0 0 22 22">
    <path fill="#3c3c44" d="M11 0.6 L21 5.6 L11 10.6 L1 5.6Z"/>
    <path fill="#3c3c44" d="M1 9.6 L3.2 8.5 L11 12.4 L18.8 8.5 L21 9.6 L11 14.6Z"/>
    <path fill="#3c3c44" d="M1 13.6 L3.2 12.5 L11 16.4 L18.8 12.5 L21 13.6 L11 18.6Z"/>
  </svg>
  <div class="abs" style="left:24px;top:10px;font-size:12px;color:#3a3a40;letter-spacing:0.05px">Aggregation Polygon (1)</div>
  <svg class="abs" style="left:210px;top:13px" width="10" height="10" viewBox="0 0 10 10"><g stroke="#3a3a40" stroke-width="1.6" stroke-linecap="round"><path d="M1.5 1.5 L8.5 8.5"/><path d="M8.5 1.5 L1.5 8.5"/></g></svg>
  <div class="abs" style="left:0;top:37px;width:233px;height:1px;background:#ececec"></div>
  <div class="abs" style="left:230px;top:38px;width:3px;height:110px;background:#c9c9c9"></div>
  <div class="abs" style="left:4px;top:42.5px;width:220px;font-size:11px;line-height:19.7px;color:#7a7a7a">
    <div style="position:relative">layer_id<span style="position:absolute;right:2px;color:#404040;-webkit-text-stroke:0.2px #404040">53394b8c-61e0-4a...</span></div>
    <div style="position:relative">plz<span style="position:absolute;right:0;color:#404040;-webkit-text-stroke:0.2px #404040">80802</span></div>
    <div style="position:relative">note<span style="position:absolute;right:0;color:#404040;-webkit-text-stroke:0.2px #404040">80802 München</span></div>
    <div style="position:relative">zipcode<span style="position:absolute;right:0;color:#404040;-webkit-text-stroke:0.2px #404040">80802</span></div>
    <div style="position:relative">count<span style="position:absolute;right:0;color:#404040;-webkit-text-stroke:0.2px #404040">3092</span></div>
    <div style="position:relative">id<span style="position:absolute;right:0;color:#404040;-webkit-text-stroke:0.2px #404040">104034</span></div>
  </div>
</div>
<!-- annotations -->
<div class="abs" style="left:264px;top:138px;width:312px;height:80px;border:4px solid #4a6fc0;border-radius:9px"></div>
<div class="abs" style="left:1149px;top:562px;width:243px;height:29px;border:3px solid #4a6fc0;border-radius:8px"></div>
<svg class="abs" style="left:0;top:0" width="1920" height="892" viewBox="0 0 1920 892">
  <g fill="none" stroke="#4a6fc0" stroke-width="3.6" stroke-linecap="butt" stroke-linejoin="miter">
    <path d="M176 177.7 L261 177.7"/>
    <path d="M190.6 163.5 L176.5 177.7 L190.6 191.9"/>
    <path d="M1392 575.6 L1422 575.6"/>
    <path d="M1409 562 L1422.6 575.6 L1409 589.2"/>
  </g>
</svg>
<div class="abs ann" style="left:29px;top:164px;font-size:25px;letter-spacing:-0.2px;-webkit-text-stroke:0.9px #4a6fc0;white-space:nowrap">Layer result</div>
<div class="abs" style="left:1435px;top:527px;width:233px;height:97px;background:rgba(255,255,255,0.45);border-radius:3px"></div>
<div class="abs ann" style="left:1440px;top:532px;font-size:25px;line-height:29px;letter-spacing:0.25px;-webkit-text-stroke:0.8px #4a6fc0;white-space:nowrap">Additional column<br>with statistical<br>operation result</div>
</body></html>
